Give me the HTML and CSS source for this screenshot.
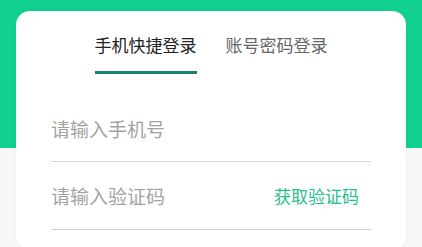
FILE: index.html
```html
<!DOCTYPE html>
<html lang="zh-CN">
<head>
<meta charset="utf-8">
<title>登录</title>
<link rel="stylesheet" href="styles.css">
</head>
<body>
<div class="page">
  <main class="card">
    <nav class="tabs">
      <span class="tab active">手机快捷登录</span>
      <span class="tab">账号密码登录</span>
    </nav>
    <form class="form">
      <div class="field">
        <input class="input" type="tel" placeholder="请输入手机号">
      </div>
      <div class="field">
        <input class="input" type="text" placeholder="请输入验证码">
        <span class="code-btn">获取验证码</span>
      </div>
    </form>
  </main>
</div>
</body>
</html>
```
FILE: styles.css
```css
html, body {
  margin: 0;
  padding: 0;
}
body {
  font-family: "Noto Sans CJK SC", "Noto Sans", sans-serif;
  background: linear-gradient(to bottom, #11d190 0, #11d190 148px, #f8f8f8 148px);
  min-height: 247px;
  overflow: hidden;
  height: 247px;
}
.page {
  padding: 11px 16px 0 16px;
}
.card {
  background: #ffffff;
  border-radius: 14px;
  box-shadow: 0 0 6px rgba(0, 0, 0, 0.04);
  padding: 25px 35px 20px 35px;
}
.tabs {
  display: flex;
  justify-content: center;
  gap: 29px;
}
.tab {
  font-size: 17px;
  line-height: 17px;
  color: #666666;
  padding-bottom: 18px;
  border-bottom: 3px solid transparent;
}
.tab.active {
  color: #222222;
  border-bottom-color: #1a7f74;
}
.form {
  margin: 20px 0 0 0;
  display: flex;
  flex-direction: column;
}
.field {
  display: flex;
  align-items: center;
  box-sizing: border-box;
  height: 68px;
  padding-top: 3px;
  border-bottom: 1px solid #d4d4d4;
}
.field + .field {
  padding-top: 1px;
}
.input {
  flex: 1;
  min-width: 0;
  border: none;
  outline: none;
  padding: 0;
  margin: 0;
  background: transparent;
  font-family: inherit;
  font-size: 19px;
  line-height: 22px;
  color: #333333;
}
.input::placeholder {
  color: #a3a3a3;
}
.code-btn {
  font-size: 17px;
  line-height: 20px;
  color: #1fc08c;
  padding-right: 12px;
}
```
